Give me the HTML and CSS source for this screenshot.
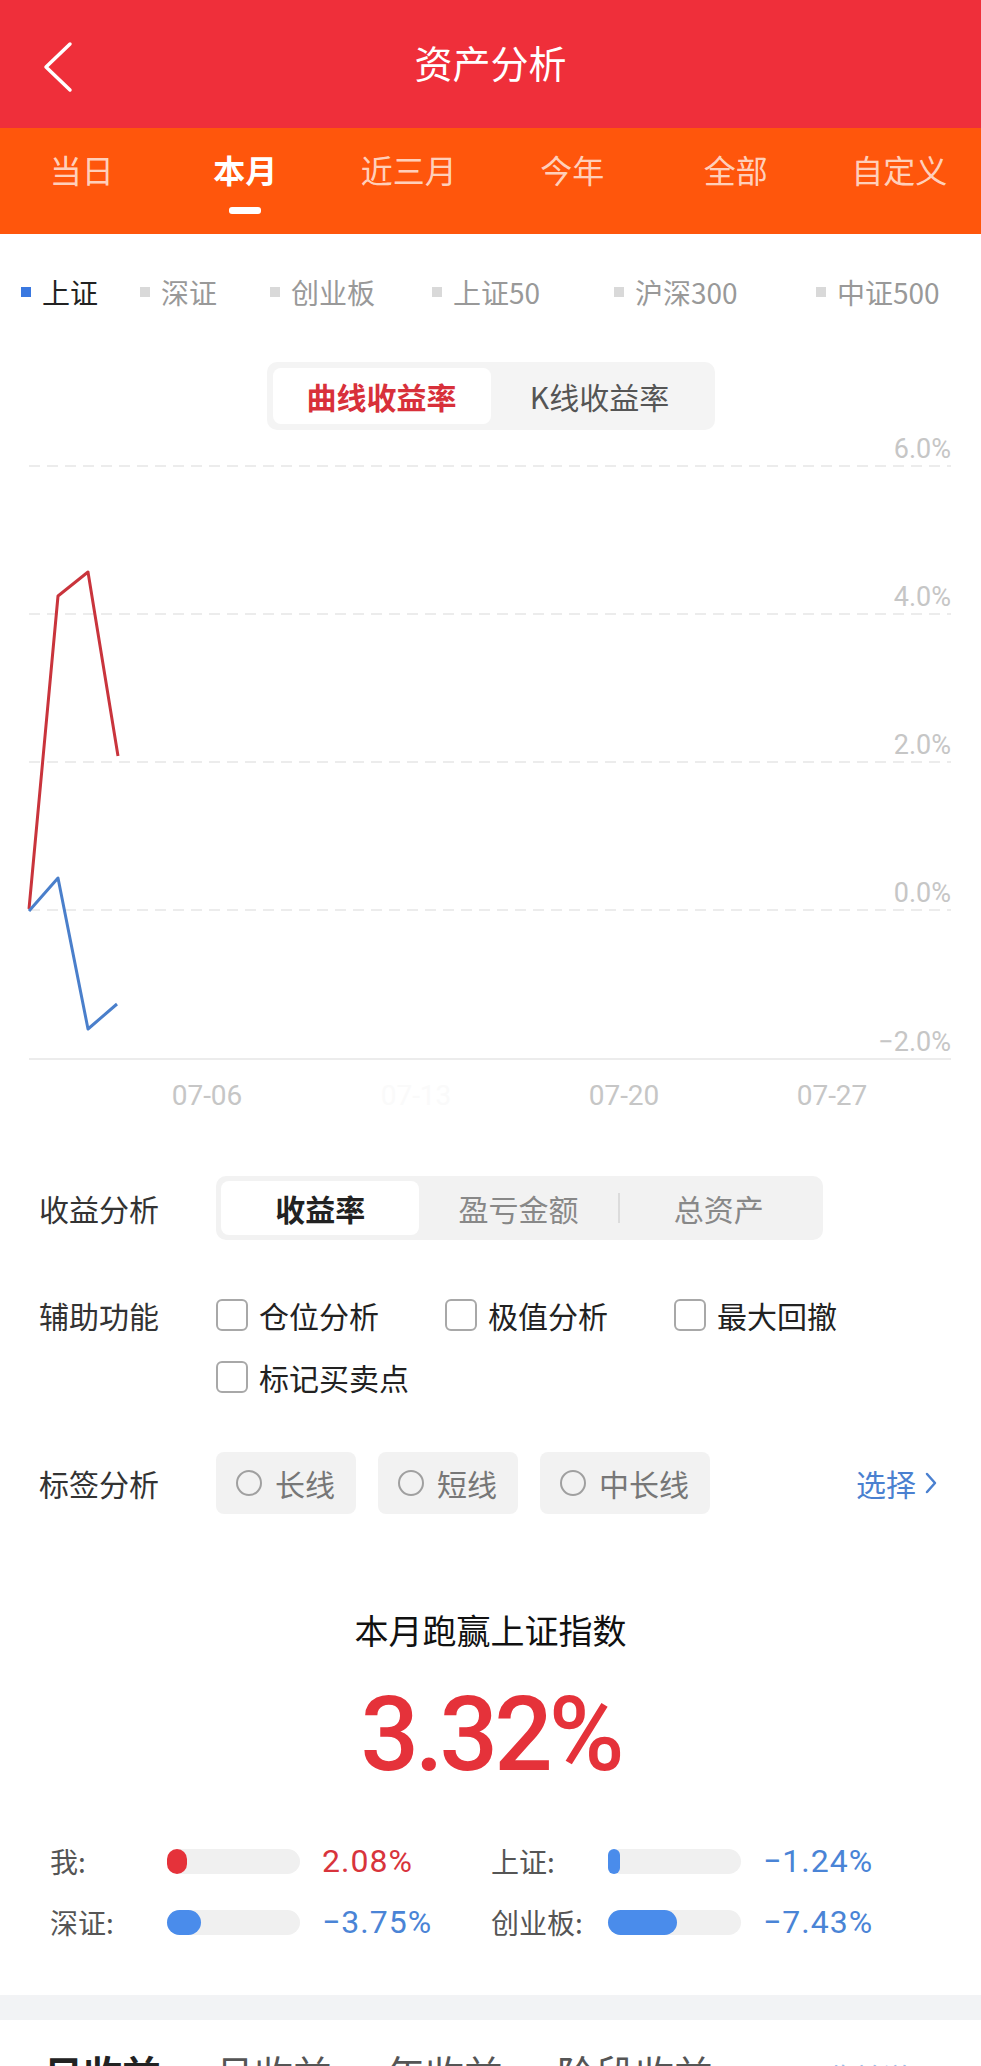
FILE: index.html
```html
<!DOCTYPE html>
<html lang="zh-CN">
<head>
    <meta charset="UTF-8">
    <meta name="viewport" content="width=device-width, initial-scale=1.0">
    <title>资产分析</title>
    <link rel="stylesheet" href="styles.css">
</head>
<body>
<div class="page">
    <header class="nav-bar">
        <a class="back" href="#">
            <svg width="36" height="58" viewBox="0 0 36 58"><polyline points="30,6 6,29 30,52" fill="none" stroke="#fff" stroke-width="3.5" stroke-linecap="round" stroke-linejoin="round"/></svg>
        </a>
        <h1>资产分析</h1>
        <span></span>
    </header>

    <nav class="period-tabs">
        <div class="period-tab">当日</div>
        <div class="period-tab active">本月</div>
        <div class="period-tab">近三月</div>
        <div class="period-tab">今年</div>
        <div class="period-tab">全部</div>
        <div class="period-tab">自定义</div>
    </nav>

    <section class="chart-card">
        <div class="legend">
            <span class="legend-item active"><i></i>上证</span>
            <span class="legend-item"><i></i>深证</span>
            <span class="legend-item"><i></i>创业板</span>
            <span class="legend-item"><i></i>上证50</span>
            <span class="legend-item"><i></i>沪深300</span>
            <span class="legend-item"><i></i>中证500</span>
        </div>

        <div class="chart-switch">
            <span class="on">曲线收益率</span>
            <span>K线收益率</span>
        </div>

        <svg class="chart" width="981" height="690" viewBox="0 0 981 690">
            <g class="grid">
                <line x1="29" y1="36" x2="951" y2="36"/>
                <line x1="29" y1="184" x2="951" y2="184"/>
                <line x1="29" y1="332" x2="951" y2="332"/>
                <line x1="29" y1="480" x2="951" y2="480"/>
            </g>
            <line class="base" x1="29" y1="629" x2="951" y2="629"/>

            <g class="axis-y">
                <text x="951" y="28">6.0%</text>
                <text x="951" y="176">4.0%</text>
                <text x="951" y="324">2.0%</text>
                <text x="951" y="472">0.0%</text>
                <text x="951" y="621">−2.0%</text>
            </g>
            <g class="axis-x">
                <text x="207" y="675">07-06</text>
                <text class="ghost" x="416" y="675">07-13</text>
                <text x="624" y="675">07-20</text>
                <text x="832" y="675">07-27</text>
            </g>

            <!-- 我的收益 / 上证指数 -->
            <polyline class="line-mine" points="29,479 58,166 88,142 118,326"/>
            <polyline class="line-index" points="29,481 58,448 88,599 117,574"/>
        </svg>
    </section>

    <section class="options">
        <div class="option-row">
            <div class="option-label">收益分析</div>
            <div class="segmented">
                <span class="on">收益率</span>
                <span>盈亏金额</span>
                <i class="sep"></i>
                <span>总资产</span>
            </div>
        </div>

        <div class="option-row top">
            <div class="option-label">辅助功能</div>
            <div class="check-list">
                <label class="check-item"><span class="check-box"></span>仓位分析</label>
                <label class="check-item"><span class="check-box"></span>极值分析</label>
                <label class="check-item"><span class="check-box"></span>最大回撤</label>
                <label class="check-item"><span class="check-box"></span>标记买卖点</label>
            </div>
        </div>

        <div class="option-row">
            <div class="option-label">标签分析</div>
            <div class="chip-list">
                <span class="chip"><span class="radio"></span>长线</span>
                <span class="chip"><span class="radio"></span>短线</span>
                <span class="chip"><span class="radio"></span>中长线</span>
            </div>
            <a class="pick" href="#">选择
                <svg width="14" height="24" viewBox="0 0 14 24"><polyline points="3,3 11,12 3,21" fill="none" stroke="#4A80D0" stroke-width="2.5" stroke-linecap="round" stroke-linejoin="round"/></svg>
            </a>
        </div>
    </section>

    <section class="summary">
        <p class="summary-title">本月跑赢上证指数</p>
        <p class="summary-value">3.32%</p>

        <div class="compare">
            <div class="compare-item">
                <span class="compare-label">我:</span>
                <span class="bar"><span class="bar-fill up" style="width: 20px"></span></span>
                <span class="compare-value up">2.08%</span>
            </div>
            <div class="compare-item">
                <span class="compare-label">上证:</span>
                <span class="bar"><span class="bar-fill" style="width: 12px"></span></span>
                <span class="compare-value">−1.24%</span>
            </div>
            <div class="compare-item">
                <span class="compare-label">深证:</span>
                <span class="bar"><span class="bar-fill" style="width: 34px"></span></span>
                <span class="compare-value">−3.75%</span>
            </div>
            <div class="compare-item">
                <span class="compare-label">创业板:</span>
                <span class="bar"><span class="bar-fill" style="width: 69px"></span></span>
                <span class="compare-value">−7.43%</span>
            </div>
        </div>
    </section>

    <div class="divider-band"></div>

    <div class="list-tabs">
        <span class="list-tab active">日收益</span>
        <span class="list-tab">月收益</span>
        <span class="list-tab">年收益</span>
        <span class="list-tab">阶段收益</span>
        <span class="list-more">收益说明</span>
    </div>
</div>
</body>
</html>
```

FILE: styles.css
```css
body {
    margin: 0;
    font-family: "Noto Sans CJK SC", "Noto Sans", sans-serif;
    background-color: #fff;
    color: #222;
}
.page {
    height: 2066px;
    overflow: hidden;
}

/* top bar */
.nav-bar {
    height: 128px;
    background-color: #EF2F3A;
    display: grid;
    grid-template-columns: 1fr auto 1fr;
    align-items: center;
    color: #fff;
}
.nav-bar .back {
    display: flex;
    padding-left: 40px;
    margin-top: 6px;
}
.nav-bar h1 {
    margin: 0 0 4px;
    font-size: 38px;
    font-weight: 400;
    line-height: 1;
}

/* period tabs */
.period-tabs {
    height: 106px;
    background-color: #FF560C;
    display: flex;
}
.period-tab {
    flex: 1;
    display: flex;
    flex-direction: column;
    align-items: center;
    padding-top: 24px;
    font-size: 32px;
    line-height: 34px;
    color: rgba(255, 255, 255, 0.74);
}
.period-tab.active {
    color: #fff;
    font-weight: 700;
}
.period-tab.active::after {
    content: "";
    width: 32px;
    height: 7px;
    margin-top: 21px;
    border-radius: 3px;
    background-color: #fff;
}

/* legend */
.legend {
    display: grid;
    grid-template-columns: 119px 130px 162px 182px 202px auto;
    padding: 38px 0 0 21px;
}
.legend-item {
    display: flex;
    align-items: center;
    gap: 11px;
    font-size: 28px;
    line-height: 40px;
    color: #999;
}
.legend-item i {
    width: 10px;
    height: 10px;
    background-color: #D9D9D9;
}
.legend-item.active {
    color: #222;
}
.legend-item.active i {
    background-color: #3A78E0;
}

.chart-switch {
    width: 448px;
    height: 68px;
    margin: 50px auto 0;
    box-sizing: border-box;
    padding: 6px;
    background-color: #F4F4F4;
    border-radius: 10px;
    display: flex;
}
.chart-switch span {
    flex: 1;
    display: flex;
    align-items: center;
    justify-content: center;
    font-size: 30px;
    color: #555;
    border-radius: 8px;
}
.chart-switch .on {
    background-color: #fff;
    color: #D8303A;
    font-weight: 700;
}

/* chart */
.chart {
    display: block;
}
.chart .grid line {
    stroke: #E6E6E6;
    stroke-width: 1.5;
    stroke-dasharray: 11 7;
}
.chart .base {
    stroke: #ECECEC;
    stroke-width: 2;
}
.chart text {
    font-family: Roboto, "Liberation Sans", sans-serif;
    font-size: 27px;
    fill: #C6C6C6;
}
.chart .axis-y text {
    text-anchor: end;
}
.chart .axis-x text {
    text-anchor: middle;
    font-size: 28px;
}
.chart .axis-x .ghost {
    fill: #FAFAFA;
}
.line-mine,
.line-index {
    fill: none;
    stroke-width: 3;
    stroke-linejoin: round;
}
.line-mine {
    stroke: #C9343C;
}
.line-index {
    stroke: #4A7FCB;
}

/* analysis options */
.options {
    display: flex;
    flex-direction: column;
    gap: 52px;
    padding: 56px 0 0 39px;
}
.option-row {
    display: flex;
    align-items: center;
}
.option-row.top {
    align-items: flex-start;
}
.option-label {
    width: 177px;
    flex: none;
    font-size: 30px;
    line-height: 46px;
    color: #333;
}
.segmented {
    width: 607px;
    height: 64px;
    box-sizing: border-box;
    padding: 5px;
    background-color: #F2F2F2;
    border-radius: 10px;
    display: flex;
    align-items: center;
}
.segmented span {
    flex: 1;
    text-align: center;
    font-size: 30px;
    line-height: 54px;
    color: #888;
}
.segmented .on {
    background-color: #fff;
    color: #222;
    font-weight: 700;
    border-radius: 8px;
}
.segmented .sep {
    width: 2px;
    height: 30px;
    background-color: #DCDCDC;
}

.check-list {
    width: 700px;
    display: flex;
    flex-wrap: wrap;
    row-gap: 16px;
}
.check-item {
    width: 229px;
    height: 46px;
    display: flex;
    align-items: center;
    gap: 11px;
    font-size: 30px;
    color: #222;
}
.check-box {
    width: 32px;
    height: 32px;
    box-sizing: border-box;
    border: 2px solid #A8A8A8;
    border-radius: 6px;
}

.chip-list {
    display: flex;
    gap: 22px;
}
.chip {
    height: 62px;
    padding: 0 21px 0 20px;
    background-color: #F2F2F2;
    border-radius: 8px;
    display: flex;
    align-items: center;
    gap: 13px;
    font-size: 30px;
    color: #777;
}
.radio {
    width: 26px;
    height: 26px;
    box-sizing: border-box;
    border: 2px solid #A0A0A0;
    border-radius: 50%;
}
.pick {
    margin-left: auto;
    margin-right: 43px;
    display: flex;
    align-items: center;
    gap: 8px;
    font-size: 30px;
    color: #4A80D0;
    text-decoration: none;
}

/* summary */
.summary {
    padding-top: 92px;
    text-align: center;
}
.summary-title {
    margin: 0;
    font-size: 34px;
    line-height: 48px;
    color: #111;
}
.summary-value {
    margin: 21px 0 0;
    font-family: Roboto, "Liberation Sans", sans-serif;
    font-size: 103px;
    font-weight: 500;
    line-height: 120px;
    letter-spacing: -4px;
    color: #E5323A;
}
.compare {
    display: grid;
    grid-template-columns: 441px 441px;
    row-gap: 13px;
    padding: 42px 0 49px 50px;
    text-align: left;
}
.compare-item {
    height: 48px;
    display: flex;
    align-items: center;
}
.compare-label {
    width: 117px;
    flex: none;
    font-size: 28px;
    color: #555;
}
.bar {
    width: 133px;
    height: 25px;
    flex: none;
    border-radius: 13px;
    background-color: #F0F0F0;
}
.bar-fill {
    display: block;
    height: 100%;
    border-radius: 13px;
    background-color: #4A8CEB;
}
.bar-fill.up {
    background-color: #E5323A;
}
.compare-value {
    margin-left: 22px;
    font-family: Roboto, "Liberation Sans", sans-serif;
    font-size: 32px;
    letter-spacing: 1px;
    color: #4A84D6;
}
.compare-value.up {
    color: #D8343C;
}

.divider-band {
    height: 25px;
    background-color: #F2F3F5;
}

/* list tabs */
.list-tabs {
    display: flex;
    align-items: baseline;
    gap: 54px;
    padding: 32px 43px 0 44px;
}
.list-tab {
    font-size: 39px;
    line-height: 40px;
    color: #555;
}
.list-tab.active {
    font-weight: 700;
    color: #222;
}
.list-more {
    margin-left: auto;
    font-size: 28px;
    color: #9BBDE8;
}
```
